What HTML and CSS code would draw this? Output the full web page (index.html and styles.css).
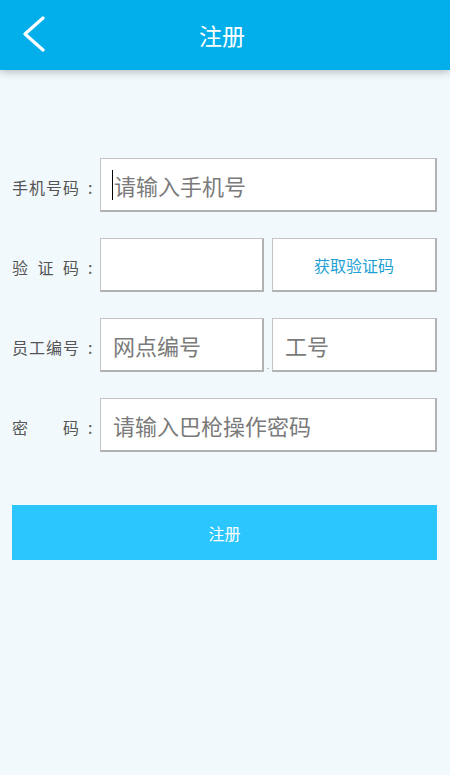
FILE: index.html
```html
<!DOCTYPE html>
<html lang="zh-CN">
<head>
    <meta charset="UTF-8">
    <meta name="viewport" content="width=device-width, initial-scale=1.0">
    <title>注册</title>
    <link rel="stylesheet" href="styles.css">
</head>
<body>
<div class="screen">
    <header class="topbar">
        <div class="back">
            <svg width="24" height="40" viewBox="0 0 24 40">
                <polyline points="20,2 2,18 20,34" fill="none" stroke="#fff" stroke-width="3.2" stroke-linecap="round" stroke-linejoin="round"/>
            </svg>
        </div>
        <h1 class="title">注册</h1>
        <div></div>
    </header>

    <div class="form">
        <div class="row">
            <label class="label"><span class="label-text">手机号码</span><span class="colon">:</span></label>
            <div class="field"><span class="caret"></span><span class="hint">请输入手机号</span></div>
        </div>

        <div class="row">
            <label class="label"><span class="label-text">验证码</span><span class="colon">:</span></label>
            <div class="pair">
                <div class="field"></div>
                <span class="sep"></span>
                <button class="code-btn">获取验证码</button>
            </div>
        </div>

        <div class="row">
            <label class="label"><span class="label-text">员工编号</span><span class="colon">:</span></label>
            <div class="pair">
                <div class="field"><span class="hint">网点编号</span></div>
                <span class="sep">.</span>
                <div class="field"><span class="hint">工号</span></div>
            </div>
        </div>

        <div class="row">
            <label class="label"><span class="label-text">密码</span><span class="colon">:</span></label>
            <div class="field"><span class="hint">请输入巴枪操作密码</span></div>
        </div>

        <button class="submit">注册</button>
    </div>
</div>
</body>
</html>
```

FILE: styles.css
```css
* {
    box-sizing: border-box;
}

body {
    margin: 0;
    background: #f1f9fd;
    font-family: "Noto Sans CJK SC", "Noto Sans", sans-serif;
}

.screen {
    width: 450px;
    min-height: 775px;
    background: #f1f9fd;
}

.topbar {
    height: 70px;
    display: grid;
    grid-template-columns: 70px 1fr 70px;
    align-items: center;
    background: #02afeb;
    box-shadow: 0 2px 8px rgba(0, 0, 0, 0.25);
}

.back {
    padding-left: 23px;
    padding-top: 2px;
    display: flex;
    align-items: center;
}

.title {
    margin: 0;
    text-align: center;
    color: #fff;
    font-size: 23px;
    font-weight: normal;
    padding-right: 6px;
}

.form {
    padding: 88px 13px 0 12px;
}

.row {
    display: flex;
    align-items: center;
    height: 54px;
    margin-bottom: 26px;
}

.label {
    width: 88px;
    flex: none;
    display: flex;
    align-items: center;
    color: #555;
    font-size: 16px;
    padding-top: 4px;
}

.label-text {
    width: 67px;
    text-align: justify;
    text-align-last: justify;
}

.colon {
    margin-left: 9px;
    font-size: 16px;
}

.field {
    flex: 1;
    min-width: 0;
    height: 54px;
    display: flex;
    align-items: center;
    padding-left: 12px;
    background: #fff;
    border: 1px solid #c4c4c4;
    border-right: 2px solid #b2b2b2;
    border-bottom: 2px solid #b2b2b2;
}

.hint {
    color: #7a7a7a;
    font-size: 22px;
}

.caret {
    width: 1px;
    height: 30px;
    background: #000;
    margin-right: 1px;
    margin-left: -1px;
}

.pair {
    flex: 1;
    display: grid;
    grid-template-columns: 164px 8px minmax(0, 1fr);
    height: 54px;
}

.sep {
    display: flex;
    align-items: flex-end;
    justify-content: center;
    color: #999;
    font-size: 10px;
    line-height: 12px;
    padding-bottom: 1px;
}

.code-btn {
    height: 54px;
    background: #fff;
    border: 1px solid #c4c4c4;
    border-right: 2px solid #b2b2b2;
    border-bottom: 2px solid #b2b2b2;
    color: #1d9fd2;
    font-family: inherit;
    font-size: 16px;
    padding: 0;
}

.submit {
    display: block;
    width: 100%;
    height: 55px;
    margin-top: 53px;
    border: none;
    background: #2ac6fd;
    color: #fff;
    font-family: inherit;
    font-size: 16px;
}
```
